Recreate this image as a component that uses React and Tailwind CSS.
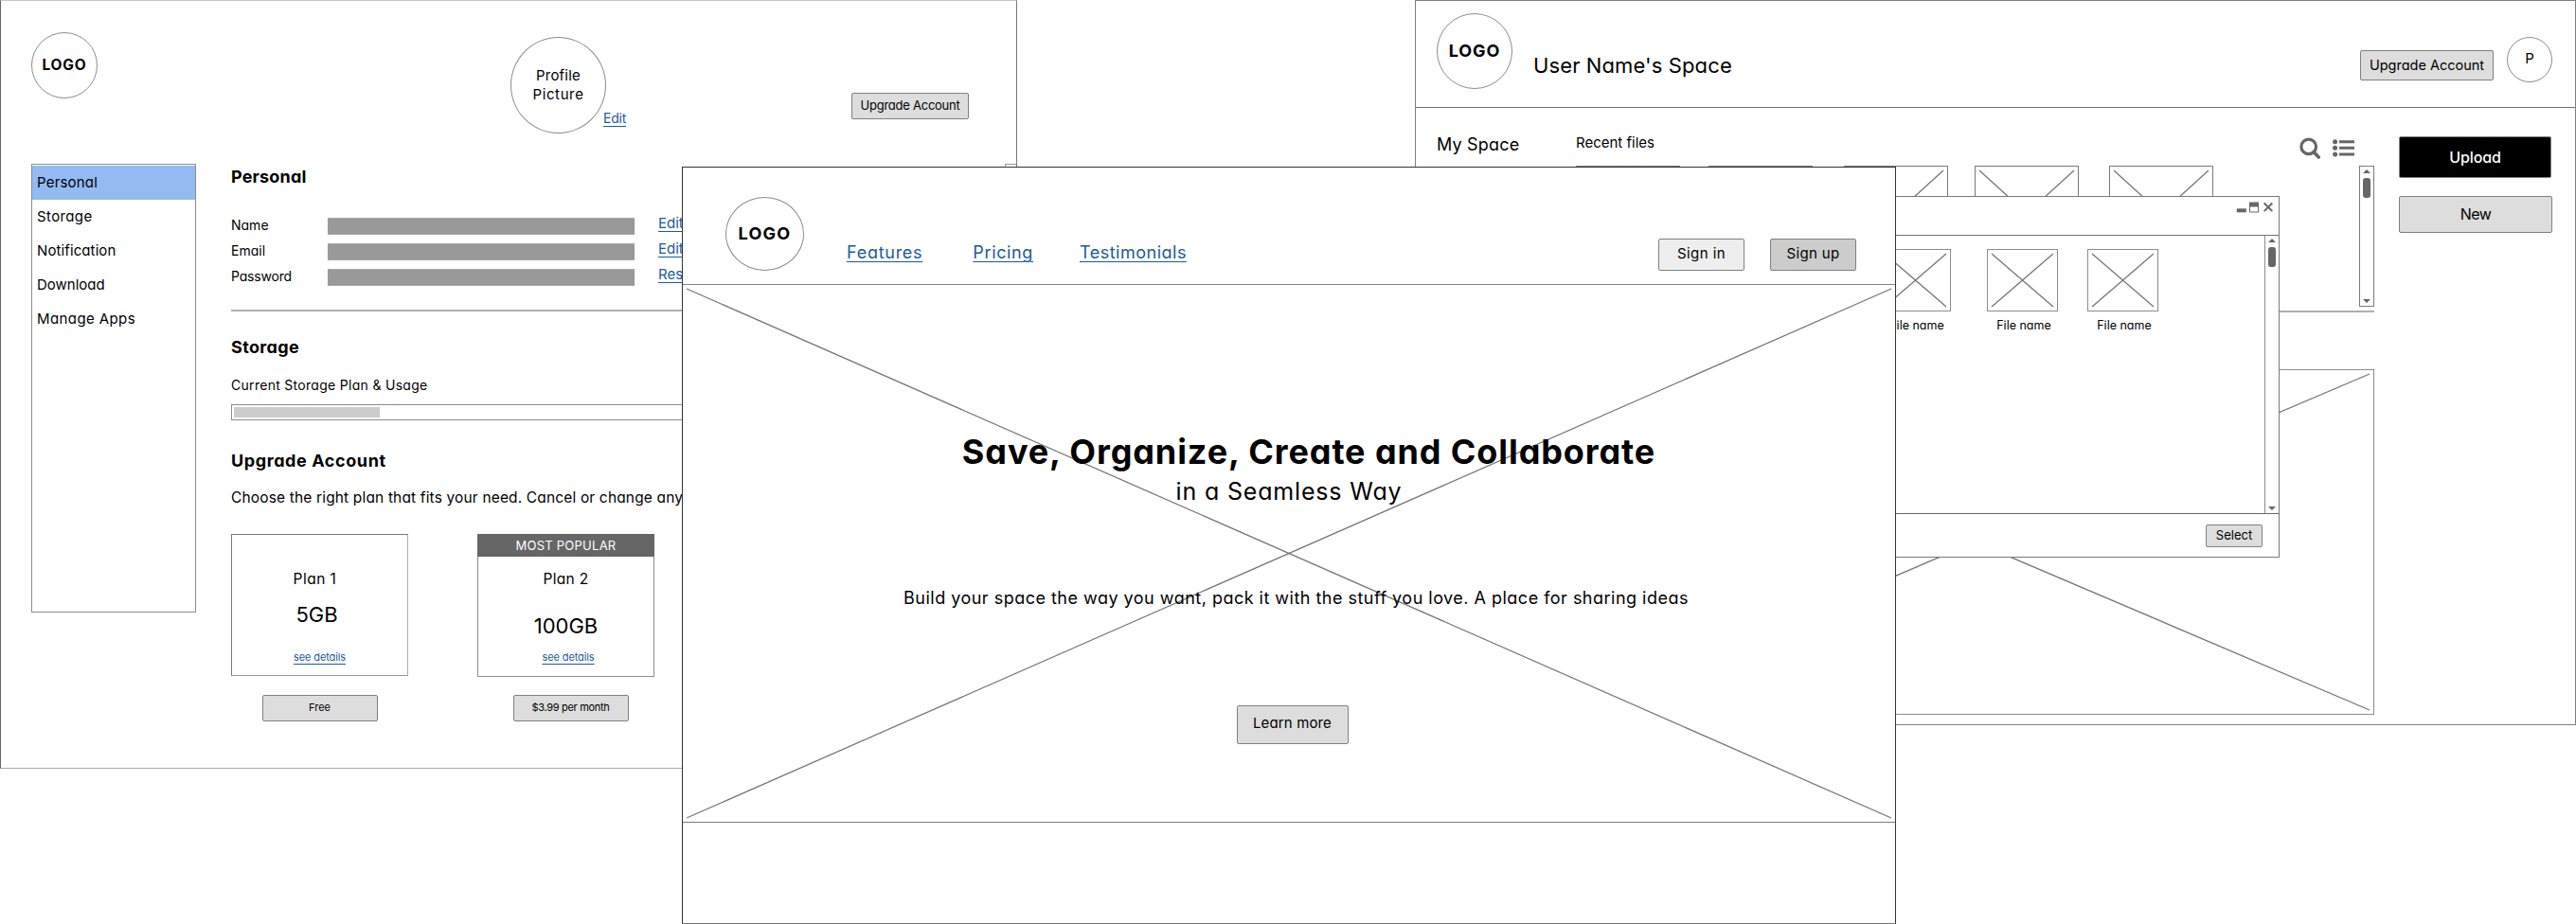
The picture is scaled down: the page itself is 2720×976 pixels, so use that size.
const LINE = "#757575";

function Circle({ className, children }) {
  return (
    <div className={`flex shrink-0 items-center justify-center rounded-[50%] border border-[#8c8c8c] bg-white ${className}`}>
      {children}
    </div>
  );
}

function Button({ className, children }) {
  return (
    <button className={`flex shrink-0 items-center justify-center rounded-[2px] border border-[#808080] ${className}`}>
      {children}
    </button>
  );
}

function Link({ className, children }) {
  return (
    <a className={`text-[#1c5a9c] underline decoration-1 ${className}`}>{children}</a>
  );
}

// Diagonal lines of an image placeholder, inset from its frame.
function Cross({ width, height, inset = 4 }) {
  return (
    <svg className="absolute inset-0" width={width} height={height} fill="none" stroke={LINE} strokeWidth="1.25">
      <path d={`M${inset} ${inset}L${width - inset} ${height - inset}M${width - inset} ${inset}L${inset} ${height - inset}`} />
    </svg>
  );
}

function ScrollBar({ className }) {
  return (
    <div className={`flex shrink-0 flex-col items-center ${className}`}>
      <svg className="mt-[3px]" width="8" height="4" fill="#666"><path d="M4 0L8 4H0z" /></svg>
      <div className="mt-[5px] h-[21px] w-2 rounded-[3px] bg-[#666]" />
      <svg className="mt-auto mb-[3px]" width="8" height="4" fill="#666"><path d="M0 0H8L4 4z" /></svg>
    </div>
  );
}

function Field({ label, labelClass, action }) {
  return (
    <div className="flex h-[27px] items-center">
      <span className={`w-[102px] pb-px text-[14px] leading-5 ${labelClass}`}>{label}</span>
      <div className="h-[18px] w-[324px] border-y border-[#a6a6a6] bg-[#999]" />
      <Link className="ml-[25px] pb-[5px] text-[15px] leading-5 underline-offset-[3px]">{action}</Link>
    </div>
  );
}

function AccountWindow() {
  return (
    <section className="absolute top-0 left-0 flex h-[812px] w-[1074px] flex-col border border-t-[#c8c8c8] border-r-[#777] border-b-[#aaa] border-l-[#666] bg-white">
      <header className="flex h-[172px] shrink-0 items-start pl-8">
        <Circle className="mt-[33px] h-[70px] w-[70px]">
          <span className="text-[15.5px] leading-5 font-bold tracking-[0.05em]">LOGO</span>
        </Circle>
        <Circle className="mt-[38px] ml-[436px] h-[102px] w-[101px] flex-col text-[15px] leading-[20px]">
          <span className="tracking-[0.014em]">Profile</span>
          <span className="tracking-[0.041em]">Picture</span>
        </Circle>
        <Link className="mt-[117px] -ml-[3px] text-[14px] leading-[14px] tracking-[-0.017em] underline-offset-[3px]">Edit</Link>
        <Button className="mt-[97px] ml-[238px] h-[28px] w-[124px] bg-[#ddd] pb-px text-[13px] tracking-[-0.019em]">Upgrade Account</Button>
      </header>

      <div className="flex">
        <nav className="ml-8 flex h-[474px] w-[174px] shrink-0 flex-col border border-[#8c8c8c] pt-px text-[15px]">
          <a className="flex h-9 items-center bg-[#94baf2] pl-[5px] tracking-[0.013em]">Personal</a>
          <a className="flex h-9 items-center pl-[5px] tracking-[0.025em]">Storage</a>
          <a className="flex h-9 items-center pl-[5px] tracking-[0.007em]">Notification</a>
          <a className="flex h-9 items-center pl-[5px]">Download</a>
          <a className="flex h-9 items-center pl-[5px] tracking-[0.027em]">Manage Apps</a>
        </nav>

        <main className="ml-[37px] w-[817px] shrink-0 whitespace-nowrap">
          <h2 className="mt-[4px] text-[18px] leading-5 font-bold tracking-[0.01em]">Personal</h2>
          <div className="mt-[28px]">
            <Field label="Name" action="Edit" labelClass="" />
            <Field label="Email" action="Edit" labelClass="" />
            <Field label="Password" action="Reset" labelClass="tracking-[-0.013em]" />
          </div>
          <div className="mt-[21px] h-[2px] bg-[#b0b0b0]" />

          <h2 className="mt-7 text-[18px] leading-5 font-bold tracking-[0.02em]">Storage</h2>
          <p className="mt-5 text-[14px] leading-5 tracking-[0.021em]">Current Storage Plan &amp; Usage</p>
          <div className="mt-[10px] h-[17px] w-[720px] border border-[#8c8c8c] p-[2px]">
            <div className="h-full w-[154px] bg-[#ccc]" />
          </div>

          <h2 className="mt-[33px] text-[18px] leading-5 font-bold tracking-[0.033em]">Upgrade Account</h2>
          <p className="mt-[19px] text-[15.5px] leading-5 tracking-[0.01em]">Choose the right plan that fits your need. Cancel or change anytime</p>

          <div className="mt-7 flex gap-[73px]">
            <div className="flex w-[187px] flex-col items-center">
              <div className="flex h-[150px] w-full flex-col items-center border border-[#7a7a7a] border-r-[#aaa] border-b-[#999]">
                <span className="mt-[37px] pr-[10px] text-[15.5px] leading-5 tracking-[0.03em]">Plan 1</span>
                <span className="mt-[15px] pr-[6px] text-[22px] leading-6">5GB</span>
                <Link className="mt-[26px] text-[11px] leading-[14px] tracking-[-0.01em] underline-offset-[3px]">see details</Link>
              </div>
              <Button className="mt-5 h-[28px] w-[122px] bg-[#ddd] pb-px text-[11px]">Free</Button>
            </div>
            <div className="flex w-[187px] flex-col items-center">
              <div className="flex h-[151px] w-full flex-col items-center border border-t-0 border-[#8c8c8c]">
                <div className="flex h-[24px] w-[187px] items-center justify-center bg-[#666] text-[13px] leading-5 tracking-[0.019em] text-white">MOST POPULAR</div>
                <span className="mt-[14px] text-[15.5px] leading-5 tracking-[0.02em]">Plan 2</span>
                <span className="mt-[27px] text-[22px] leading-6">100GB</span>
                <Link className="mt-[14px] pl-[5px] text-[11px] leading-[14px] tracking-[-0.01em] underline-offset-[3px]">see details</Link>
              </div>
              <Button className="mt-[19px] ml-[10px] h-[28px] w-[122px] bg-[#ddd] pb-px text-[11px] tracking-[-0.028em]">$3.99 per month</Button>
            </div>
          </div>
        </main>
        <div className="h-[474px] w-[12px] border border-r-0 border-[#999]" />
      </div>
    </section>
  );
}

const thumbs = ["mr-[30px]", "mr-[33px]", "mr-[28px]", "mr-[32px]", "mr-auto"];

function SpaceWindow() {
  return (
    <section className="absolute top-0 left-[1494px] flex h-[766px] w-[1226px] flex-col border border-[#7f7f7f] bg-white whitespace-nowrap">
      <header className="flex h-[113px] shrink-0 items-start border-b border-[#707070] pr-[24px] pl-[22px]">
        <Circle className="mt-[13px] h-[80px] w-[80px]">
          <span className="text-[18px] leading-5 font-bold tracking-[0.05em]">LOGO</span>
        </Circle>
        <h1 className="mt-[53px] ml-[22px] text-[22px] leading-[30px] tracking-[0.005em]">User Name's Space</h1>
        <Button className="mt-[52px] ml-auto h-[32px] w-[141px] bg-[#ddd] pb-px text-[14.5px]">Upgrade Account</Button>
        <Circle className="mt-[38px] ml-[14px] h-[48px] w-[48px] pb-px text-[15px]">P</Circle>
      </header>

      <div className="flex pl-[22px]">
        <aside className="mt-[29px] w-[147px] shrink-0 text-[18px] leading-5 tracking-[0.011em]">My Space</aside>
        <main className="w-[843px] shrink-0">
          <div className="flex h-[61px] items-start">
            <h2 className="mt-[27px] text-[15px] leading-5">Recent files</h2>
            <svg className="mt-[31px] ml-auto" width="23" height="24" fill="none" stroke="#666">
              <circle cx="9.7" cy="9.9" r="7.8" strokeWidth="3.2" />
              <path d="M15 15.6L20.3 21" strokeWidth="3.6" strokeLinecap="round" />
            </svg>
            <svg className="mt-[33px] mr-[20px] ml-[12px]" width="24" height="19" fill="#666">
              <circle cx="2.6" cy="2.8" r="2.5" />
              <circle cx="2.6" cy="9.3" r="2.5" />
              <circle cx="2.6" cy="16" r="2.5" />
              <path d="M7 1.3h16v3H7zM7 7.8h16v3H7zM7 14.5h16v3H7z" />
            </svg>
          </div>
          <div className="flex h-[155px] border-b-2 border-[#b0b0b0]">
            {thumbs.map((gap, i) => (
              <div key={i} className={`relative h-[101px] w-[110px] shrink-0 border border-[#7a7a7a] ${gap}`}>
                <Cross width={108} height={99} />
              </div>
            ))}
            <ScrollBar className="h-[149px] w-[16px] border border-[#7a7a7a]" />
          </div>
          <div className="relative mt-[60px] h-[365px] border border-[#8c8c8c]">
            <Cross width={841} height={363} />
          </div>
        </main>
        <div className="ml-[26px] flex w-[162px] flex-col pt-[30px]">
          <Button className="h-[44px] w-[161px] bg-black text-[16px] font-medium tracking-[-0.01em] text-white">Upload</Button>
          <Button className="mt-[19px] h-[39px] w-[162px] bg-[#ddd] pb-[2px] text-[16px] tracking-[-0.03em]">New</Button>
        </div>
      </div>
    </section>
  );
}

const files = ["mr-[38px]", "mr-[31px]", "mr-[112px]"];

function FileDialog() {
  return (
    <section className="absolute top-[207px] left-[1801px] flex h-[382px] w-[606px] flex-col border border-[#7a7a7a] bg-white">
      <header className="flex h-[41px] shrink-0 items-start justify-end border-b border-[#707070] pt-[5px] pr-[5px]">
        <svg width="40" height="13" fill="#666">
          <path d="M.8 7.3h10v4H.8z" />
          <path d="M14.5 1.5h9v9.500h-9z" fill="none" stroke="#666" />
          <path d="M14 .5h10v5H14z" />
          <path d="M29.700 1.500l8.600 8.600M38.300 1.500l-8.600 8.600" stroke="#666" strokeWidth="2" />
        </svg>
      </header>
      <div className="flex grow justify-end">
        {files.map((gap, i) => (
          <div key={i} className={`mt-[14px] flex w-[75px] shrink-0 flex-col items-center ${gap}`}>
            <div className="relative h-[66px] w-[75px] border border-[#8c8c8c]">
              <Cross width={73} height={64} />
            </div>
            <span className="mt-[5px] pl-[3px] text-[12.5px] leading-5 whitespace-nowrap">File name</span>
          </div>
        ))}
        <ScrollBar className="w-[15px] border-l border-[#8c8c8c]" />
      </div>
      <footer className="flex h-[46px] shrink-0 items-start justify-end border-t border-[#666] pt-[11px] pr-[17px]">
        <Button className="h-[24px] w-[60px] bg-[#ddd] pb-px text-[13px]">Select</Button>
      </footer>
    </section>
  );
}

function LandingWindow() {
  return (
    <section className="absolute top-[176px] left-[720px] flex h-[800px] w-[1282px] flex-col border border-[#333] border-b-[#777] bg-white whitespace-nowrap">
      <header className="flex h-[124px] shrink-0 items-start border-b border-[#858585] pr-[41px] pl-[45px]">
        <Circle className="mt-[31px] h-[78px] w-[83px]">
          <span className="text-[18px] leading-5 font-bold tracking-[0.07em]">LOGO</span>
        </Circle>
        <Link className="mt-[80px] ml-[45px] text-[18px] leading-5 tracking-[0.041em] underline-offset-[3px]">Features</Link>
        <Link className="mt-[80px] ml-[53px] text-[18px] leading-5 tracking-[0.035em] underline-offset-[3px]">Pricing</Link>
        <Link className="mt-[80px] ml-[49px] text-[18px] leading-5 tracking-[0.028em] underline-offset-[3px]">Testimonials</Link>
        <Button className="mt-[75px] ml-auto h-[34px] w-[91px] bg-[#eee] pb-px text-[15px] tracking-[0.028em]">Sign in</Button>
        <Button className="mt-[75px] ml-[27px] h-[34px] w-[91px] bg-[#ccc] pb-px text-[15px] tracking-[0.023em]">Sign up</Button>
      </header>
      <div className="relative flex h-[568px] shrink-0 flex-col items-center border-b border-[#7a7a7a]">
        <Cross width={1280} height={567} />
        <h1 className="relative mt-[156px] pl-[42px] text-[36px] leading-10 font-bold tracking-[0.025em]">Save, Organize, Create and Collaborate</h1>
        <p className="relative mt-[7px] text-[25px] leading-[30px] tracking-[0.033em]">in a Seamless Way</p>
        <p className="relative mt-[88px] pl-[15px] text-[18px] leading-5 tracking-[0.027em]">Build your space the way you want, pack it with the stuff you love. A place for sharing ideas</p>
        <Button className="relative mt-[103px] ml-[7px] h-[41px] w-[118px] bg-[#ddd] pb-[2px] text-[15px] tracking-[0.009em]">Learn more</Button>
      </div>
    </section>
  );
}

export default function App() {
  return (
    <div className="relative h-[976px] w-[2720px] overflow-hidden bg-white font-['Inter',sans-serif] text-black [font-feature-settings:'cv11']">
      <AccountWindow />
      <SpaceWindow />
      <FileDialog />
      <LandingWindow />
    </div>
  );
}
